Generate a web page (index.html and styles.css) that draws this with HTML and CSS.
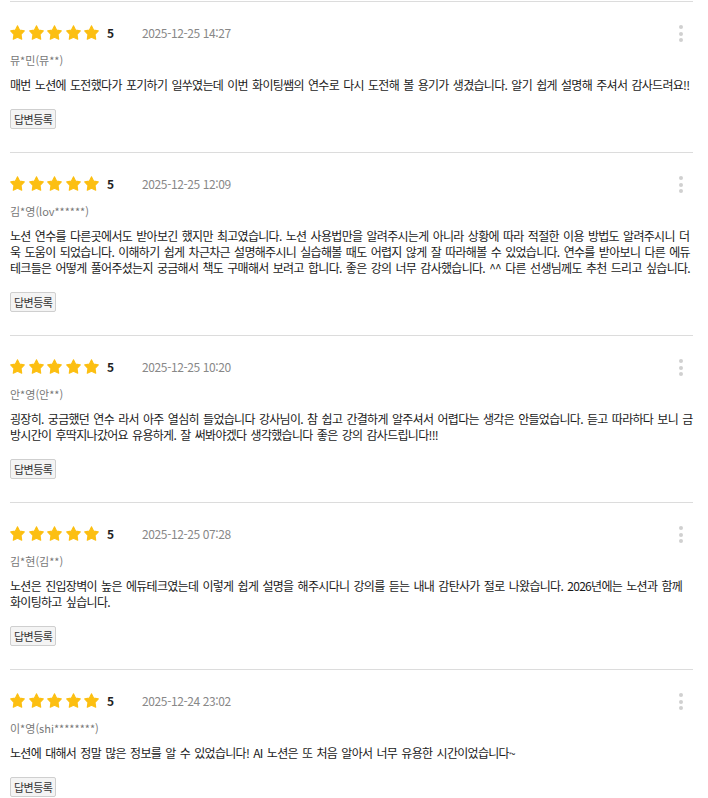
FILE: index.html
```html
<!DOCTYPE html>
<html lang="ko">
<head>
<meta charset="utf-8">
<link rel="stylesheet" href="styles.css">
</head>
<body>
<svg width="0" height="0" class="defs">
  <defs>
    <symbol id="star" viewBox="0 -0.2 20 19.4" preserveAspectRatio="none">
      <path d="M10 0.9L12.94 6.45 19.1 7.41 14.76 12.05 15.7 18.2 10 15.5 4.3 18.2 5.24 12.05 0.9 7.41 7.06 6.45z" fill="#fcbf12" stroke="#fcbf12" stroke-width="1.4" stroke-linejoin="round"/>
    </symbol>
  </defs>
</svg>
<div class="list">
  <div class="review">
    <div class="head">
      <div class="stars"><svg class="star"><use href="#star"/></svg><svg class="star"><use href="#star"/></svg><svg class="star"><use href="#star"/></svg><svg class="star"><use href="#star"/></svg><svg class="star"><use href="#star"/></svg></div>
      <span class="score">5</span>
      <span class="date">2025-12-25 14:27</span>
    </div>
    <div class="user">뮤*민(뮤**)</div>
    <p class="content">매번 노션에 도전했다가 포기하기 일쑤였는데 이번 화이팅쌤의 연수로 다시 도전해 볼 용기가 생겼습니다. 알기 쉽게 설명해 주셔서 감사드려요!!</p>
    <button class="btn">답변등록</button>
    <div class="more"><i></i><i></i><i></i></div>
  </div>
  <div class="review">
    <div class="head">
      <div class="stars"><svg class="star"><use href="#star"/></svg><svg class="star"><use href="#star"/></svg><svg class="star"><use href="#star"/></svg><svg class="star"><use href="#star"/></svg><svg class="star"><use href="#star"/></svg></div>
      <span class="score">5</span>
      <span class="date">2025-12-25 12:09</span>
    </div>
    <div class="user">김*영(lov******)</div>
    <p class="content">노션 연수를 다른곳에서도 받아보긴 했지만 최고였습니다. 노션 사용법만을 알려주시는게 아니라 상황에 따라 적절한 이용 방법도 알려주시니 더욱 도움이 되었습니다. 이해하기 쉽게 차근차근 설명해주시니 실습해볼 때도 어렵지 않게 잘 따라해볼 수 있었습니다. 연수를 받아보니 다른 에듀테크들은 어떻게 풀어주셨는지 궁금해서 책도 구매해서 보려고 합니다. 좋은 강의 너무 감사했습니다. ^^ 다른 선생님께도 추천 드리고 싶습니다.</p>
    <button class="btn">답변등록</button>
    <div class="more"><i></i><i></i><i></i></div>
  </div>
  <div class="review">
    <div class="head">
      <div class="stars"><svg class="star"><use href="#star"/></svg><svg class="star"><use href="#star"/></svg><svg class="star"><use href="#star"/></svg><svg class="star"><use href="#star"/></svg><svg class="star"><use href="#star"/></svg></div>
      <span class="score">5</span>
      <span class="date">2025-12-25 10:20</span>
    </div>
    <div class="user">안*영(안**)</div>
    <p class="content">굉장히. 궁금했던 연수 라서 아주 열심히 들었습니다 강사님이. 참 쉽고 간결하게 알주셔서 어렵다는 생각은 안들었습니다. 듣고 따라하다 보니 금방시간이 후딱지나갔어요 유용하게. 잘 써봐야겠다 생각했습니다 좋은 강의 감사드립니다!!!</p>
    <button class="btn">답변등록</button>
    <div class="more"><i></i><i></i><i></i></div>
  </div>
  <div class="review">
    <div class="head">
      <div class="stars"><svg class="star"><use href="#star"/></svg><svg class="star"><use href="#star"/></svg><svg class="star"><use href="#star"/></svg><svg class="star"><use href="#star"/></svg><svg class="star"><use href="#star"/></svg></div>
      <span class="score">5</span>
      <span class="date">2025-12-25 07:28</span>
    </div>
    <div class="user">김*현(김**)</div>
    <p class="content">노션은 진입장벽이 높은 에듀테크였는데 이렇게 쉽게 설명을 해주시다니 강의를 듣는 내내 감탄사가 절로 나왔습니다. 2026년에는 노션과 함께 화이팅하고 싶습니다.</p>
    <button class="btn">답변등록</button>
    <div class="more"><i></i><i></i><i></i></div>
  </div>
  <div class="review">
    <div class="head">
      <div class="stars"><svg class="star"><use href="#star"/></svg><svg class="star"><use href="#star"/></svg><svg class="star"><use href="#star"/></svg><svg class="star"><use href="#star"/></svg><svg class="star"><use href="#star"/></svg></div>
      <span class="score">5</span>
      <span class="date">2025-12-24 23:02</span>
    </div>
    <div class="user">이*영(shi********)</div>
    <p class="content">노션에 대해서 정말 많은 정보를 알 수 있었습니다! AI 노션은 또 처음 알아서 너무 유용한 시간이었습니다~</p>
    <button class="btn">답변등록</button>
    <div class="more"><i></i><i></i><i></i></div>
  </div>
</div>
</body>
</html>
```
FILE: styles.css
```css
html, body {
  margin: 0;
  background: #fff;
}
body {
  padding: 1px 15px 0 10px;
  font-family: "Noto Sans CJK KR", "Noto Sans", sans-serif;
  color: #222;
}
.defs {
  position: absolute;
  width: 0;
  height: 0;
}
.review {
  position: relative;
  border-top: 1px solid #dcdcdc;
  padding: 22px 0 23px;
}
.head {
  display: flex;
  align-items: center;
  height: 16px;
}
.stars {
  display: flex;
  gap: 3.5px;
}
.star {
  width: 15px;
  height: 15px;
  display: block;
}
.score {
  margin-left: 8px;
  font-size: 12px;
  font-weight: 700;
  color: #222;
}
.date {
  margin-left: 28px;
  font-size: 12px;
  color: #888;
  letter-spacing: -0.4px;
}
.user {
  margin-top: 12px;
  font-size: 11px;
  line-height: 16px;
  color: #777;
}
.content {
  margin: 9px 0 0;
  font-size: 12px;
  line-height: 16px;
  color: #1a1a1a;
  letter-spacing: -0.7px;
  word-spacing: 1.5px;
  word-break: break-all;
}
.btn {
  display: block;
  margin-top: 16px;
  height: 20px;
  padding: 0 3px;
  border: 1px solid #cfcfcf;
  border-radius: 2px;
  background: #f4f4f4;
  font-family: inherit;
  font-size: 11px;
  line-height: 18px;
  color: #333;
  letter-spacing: -0.5px;
}
.more {
  position: absolute;
  right: 10px;
  top: 23px;
  display: flex;
  flex-direction: column;
  gap: 2.5px;
}
.more i {
  display: block;
  width: 4px;
  height: 4px;
  border-radius: 50%;
  background: #d0d0d0;
}
```
